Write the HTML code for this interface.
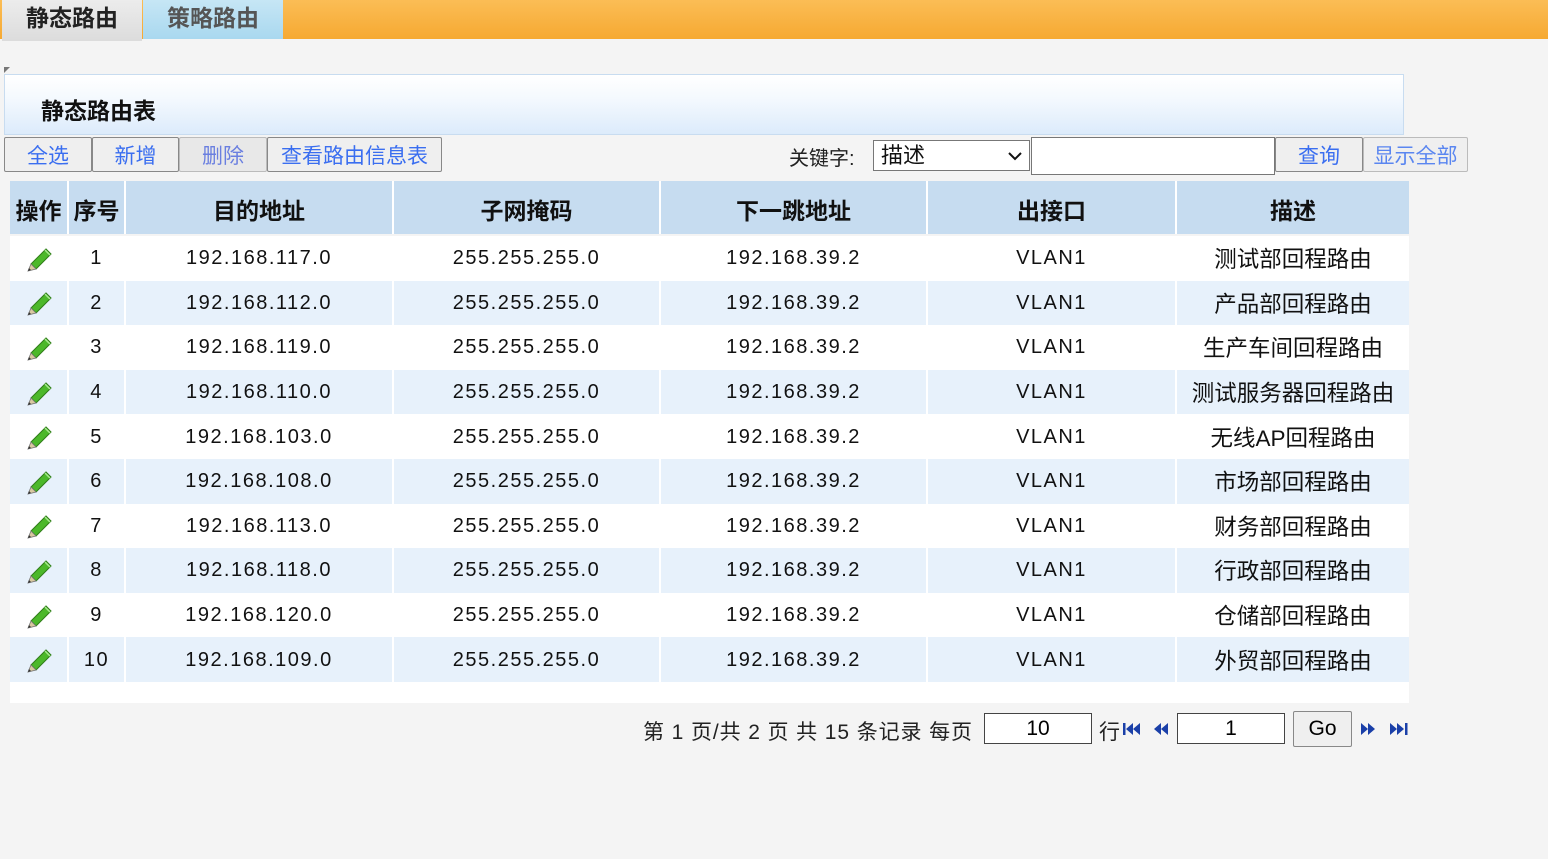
<!DOCTYPE html>
<html><head><meta charset="utf-8"><style>
*{box-sizing:border-box;margin:0;padding:0}
body{width:1548px;height:859px;background:#f4f4f4;font-family:"Liberation Sans","Noto Sans CJK SC",sans-serif;position:relative;overflow:hidden}
.topbar{position:absolute;left:0;top:0;width:1548px;height:39px;background:linear-gradient(#fbbd55,#f6a932)}
.tab1{position:absolute;left:2px;top:0;width:140px;height:41px;background:linear-gradient(#ececec,#dcdcdc);font-weight:bold;font-size:23px;color:#222;text-align:center;line-height:37px}
.tab2{position:absolute;left:143px;top:0;width:140px;height:39px;background:linear-gradient(#c6e6f5,#a9d8ef);font-weight:bold;font-size:23px;color:#555;text-align:center;line-height:37px}
.corner{position:absolute;left:4px;top:67px;width:0;height:0;border-top:6px solid #777;border-right:6px solid transparent}
.title{position:absolute;left:4px;top:74px;width:1400px;height:61px;border:1px solid #c8dcf0;background:linear-gradient(#fff,#f4f9fe 40%,#dcebfb);font-weight:bold;font-size:23px;color:#111;padding:17px 0 0 36px}
.btn{position:absolute;top:137px;height:35px;border:1px solid #888;border-radius:2px;background:#efefef;color:#3a6ef0;font-size:21px;text-align:center;line-height:37px}
.kw{position:absolute;left:789px;top:142px;font-size:20px;color:#222}
.sel{position:absolute;left:873px;top:140px;width:157px;height:31px;border:1px solid #777;background:#fff;font-size:22px;padding-left:7px;line-height:30px;color:#111}
.sel svg{position:absolute;right:6px;top:10px}
.inp{position:absolute;left:1031px;top:137px;width:244px;height:38px;border:1px solid #777;background:#fff}
table{position:absolute;left:10px;top:181px;width:1399px;border-collapse:collapse;background:#fff}
th{background:#c6dcf0;height:53px;font-size:23px;font-weight:bold;color:#111;border-left:2px solid #fff;padding-top:2px}
td{height:44.6px;font-size:20px;color:#111;text-align:center;border-left:2px solid #fff;letter-spacing:1.5px;padding-top:1px}
td.cn{letter-spacing:0;font-size:22.5px;padding-top:0}
td svg{vertical-align:middle}
tr.alt td{background:#e7f1fb}
th:first-child,td:first-child{border-left:none}
.tail{position:absolute;left:10px;top:682px;width:1399px;height:21px;background:#fff}
.pg{position:absolute;top:716px;font-size:21px;color:#222}
.box{position:absolute;top:713px;height:31px;border:1px solid #444;background:#fff;font-size:21px;text-align:center;line-height:29px}
.go{position:absolute;left:1293px;top:711px;width:59px;height:36px;border:1px solid #888;border-radius:2px;background:#efefef;font-size:21px;text-align:center;line-height:34px}
</style></head><body>
<div class="topbar"></div>
<div class="tab1">静态路由</div>
<div class="tab2">策略路由</div>
<div class="corner"></div>
<div class="title">静态路由表</div>
<div class="btn" style="left:4px;width:88px">全选</div>
<div class="btn" style="left:92px;width:87px">新增</div>
<div class="btn" style="left:179px;width:88px;border-color:#bbb;color:#6a7fe0;background:#e8e8e8">删除</div>
<div class="btn" style="left:267px;width:175px">查看路由信息表</div>
<div class="kw">关键字:</div>
<div class="sel">描述<svg width="16" height="10"><path d="M2 2 L8 8 L14 2" stroke="#111" stroke-width="2" fill="none"/></svg></div>
<div class="inp"></div>
<div class="btn" style="left:1275px;width:88px">查询</div>
<div class="btn" style="left:1363px;width:105px;border-color:#bbb;color:#5a86f0">显示全部</div>
<table>
<tr><th style="width:58px">操作</th><th style="width:57px">序号</th><th style="width:268px">目的地址</th><th style="width:267px">子网掩码</th><th style="width:267px">下一跳地址</th><th style="width:249px">出接口</th><th>描述</th></tr>
</table>
<table style="top:236px">
<colgroup><col style="width:58px"><col style="width:57px"><col style="width:268px"><col style="width:267px"><col style="width:267px"><col style="width:249px"><col></colgroup>
<tbody id="tb"></tbody>
</table>
<div class="tail"></div>
<div class="pg" style="left:643px;letter-spacing:0.9px">第 1 页/共 2 页 共 15 条记录 每页</div>
<div class="box" style="left:984px;width:108px">10</div>
<div class="pg" style="left:1099px">行</div>
<svg style="position:absolute;left:1122px;top:721px" width="20" height="16"><rect x="1" y="2" width="2.5" height="12" fill="#1a3fa8"/><path d="M11 2 L4 8 L11 14Z M18 2 L11 8 L18 14Z" fill="#1a3fa8"/></svg>
<svg style="position:absolute;left:1152px;top:721px" width="18" height="16"><path d="M9 2 L2 8 L9 14Z M16 2 L9 8 L16 14Z" fill="#1a3fa8"/></svg>
<div class="box" style="left:1177px;width:108px">1</div>
<div class="go">Go</div>
<svg style="position:absolute;left:1359px;top:721px" width="18" height="16"><path d="M2 2 L9 8 L2 14Z M9 2 L16 8 L9 14Z" fill="#1a3fa8"/></svg>
<svg style="position:absolute;left:1388px;top:721px" width="22" height="16"><path d="M2 2 L9 8 L2 14Z M9 2 L16 8 L9 14Z" fill="#1a3fa8"/><rect x="17" y="2" width="2.5" height="12" fill="#1a3fa8"/></svg>
<script>
var d=[["192.168.117.0","测试部回程路由"],["192.168.112.0","产品部回程路由"],["192.168.119.0","生产车间回程路由"],["192.168.110.0","测试服务器回程路由"],["192.168.103.0","无线AP回程路由"],["192.168.108.0","市场部回程路由"],["192.168.113.0","财务部回程路由"],["192.168.118.0","行政部回程路由"],["192.168.120.0","仓储部回程路由"],["192.168.109.0","外贸部回程路由"]];
var pen='<svg width="28" height="28" viewBox="0 0 28 28"><path d="M6 19 L21 4 L26 9 L11 24 Z" fill="#4cb82a" stroke="#2f7d18" stroke-width="1"/><path d="M20 5 L25 10" stroke="#a8e890" stroke-width="1.5"/><path d="M6 19 L11 24 L3 26 Z" fill="#d9c9a0" stroke="#777" stroke-width="0.8"/><path d="M3 26 L4 23 L6 25Z" fill="#333"/></svg>';
var h='';d.forEach(function(r,i){h+='<tr'+(i%2?' class="alt"':'')+'><td>'+pen+'</td><td>'+(i+1)+'</td><td>'+r[0]+'</td><td>255.255.255.0</td><td>192.168.39.2</td><td>VLAN1</td><td class="cn">'+r[1]+'</td></tr>'});
document.getElementById('tb').innerHTML=h;
</script>
</body></html>
